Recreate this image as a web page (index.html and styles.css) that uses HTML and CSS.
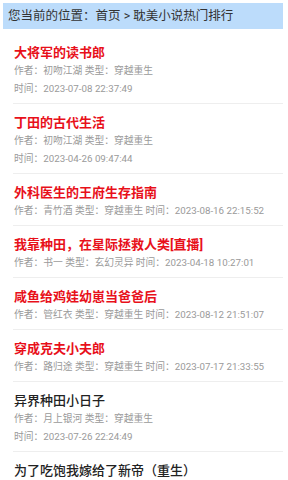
FILE: index.html
```html
<!DOCTYPE html>
<html lang="zh-CN">
<head>
    <meta charset="UTF-8">
    <meta name="viewport" content="width=device-width, initial-scale=1.0">
    <title>耽美小说热门排行</title>
    <link rel="stylesheet" href="styles.css">
</head>
<body>
    <div class="crumb">您当前的位置：<a href="#">首页</a> &gt; 耽美小说热门排行</div>

    <ul class="book-list">
        <li class="book">
            <a class="book-title hot" href="#">大将军的读书郎</a>
            <p class="meta"><span>作者：初吻江湖</span> <span>类型：穿越重生</span> <span>时间：2023-07-08 22:37:49</span></p>
        </li>
        <li class="book">
            <a class="book-title hot" href="#">丁田的古代生活</a>
            <p class="meta"><span>作者：初吻江湖</span> <span>类型：穿越重生</span> <span>时间：2023-04-26 09:47:44</span></p>
        </li>
        <li class="book">
            <a class="book-title hot" href="#">外科医生的王府生存指南</a>
            <p class="meta"><span>作者：青竹酒</span> <span>类型：穿越重生</span> <span>时间：2023-08-16 22:15:52</span></p>
        </li>
        <li class="book">
            <a class="book-title hot" href="#">我靠种田，在星际拯救人类[直播]</a>
            <p class="meta"><span>作者：书一</span> <span>类型：玄幻灵异</span> <span>时间：2023-04-18 10:27:01</span></p>
        </li>
        <li class="book">
            <a class="book-title hot" href="#">咸鱼给鸡娃幼崽当爸爸后</a>
            <p class="meta"><span>作者：管红衣</span> <span>类型：穿越重生</span> <span>时间：2023-08-12 21:51:07</span></p>
        </li>
        <li class="book">
            <a class="book-title hot" href="#">穿成克夫小夫郎</a>
            <p class="meta"><span>作者：路归途</span> <span>类型：穿越重生</span> <span>时间：2023-07-17 21:33:55</span></p>
        </li>
        <li class="book">
            <a class="book-title" href="#">异界种田小日子</a>
            <p class="meta"><span>作者：月上银河</span> <span>类型：穿越重生</span> <span>时间：2023-07-26 22:24:49</span></p>
        </li>
        <li class="book">
            <a class="book-title" href="#">为了吃饱我嫁给了新帝（重生）</a>
        </li>
    </ul>
</body>
</html>
```

FILE: styles.css
```css
* {
    margin: 0;
    padding: 0;
    box-sizing: border-box;
}

body {
    background: #fff;
    color: #333;
    font-family: Roboto, "Noto Sans CJK SC", sans-serif;
}

a {
    color: inherit;
    text-decoration: none;
}

.crumb {
    margin: 3px 5px 0 3px;
    padding-left: 5px;
    height: 26px;
    line-height: 26px;
    background: #bcdcfb;
    font-size: 12.5px;
    color: #333;
    white-space: nowrap;
}

.book-list {
    list-style: none;
    margin: 14px 5px 0 13px;
}

.book {
    padding: 9px 0 5px 1px;
    border-bottom: 1px solid #eee;
}

.book:first-child {
    padding-top: 0;
}

.book:last-child {
    border-bottom: none;
}

.book-title {
    display: block;
    font-size: 13px;
    line-height: 19px;
    font-weight: 500;
    color: #222;
}

.book-title.hot {
    color: #e8101a;
    font-weight: bold;
}

.meta {
    padding-right: 16px;
    font-size: 9.75px;
    line-height: 18px;
    color: #9a9a9a;
}

.meta span {
    white-space: nowrap;
}
```
